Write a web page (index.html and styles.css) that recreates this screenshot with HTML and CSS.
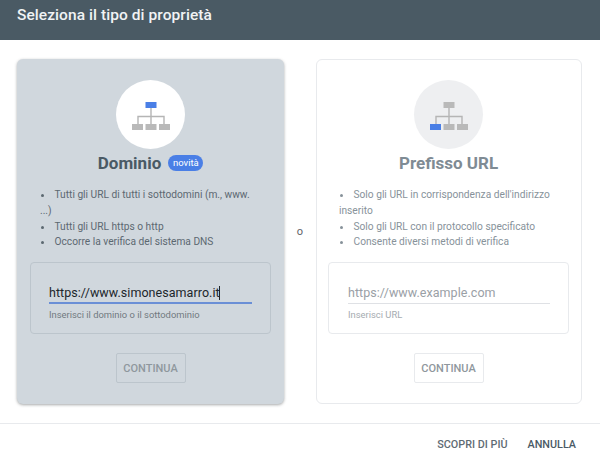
FILE: index.html
```html
<!DOCTYPE html>
<html lang="it">
<head>
<meta charset="utf-8">
<title>Seleziona il tipo di proprietà</title>
<link rel="stylesheet" href="styles.css">
</head>
<body>
<header class="top">Seleziona il tipo di proprietà</header>
<main class="choices">
  <section class="card card-active">
    <div class="circle">
      <svg class="tree" viewBox="0 0 38 28" width="38" height="28">
        <path class="line" d="M19 6V22M6 22V14.5H32V22"/>
        <rect class="blue" x="13.5" y="0" width="11" height="6"/>
        <rect class="grey" x="0" y="22" width="11" height="6"/>
        <rect class="grey" x="13.5" y="22" width="11" height="6"/>
        <rect class="grey" x="27" y="22" width="11" height="6"/>
      </svg>
    </div>
    <h2 class="name">Dominio <span class="badge">novità</span></h2>
    <ul class="points">
      <li>Tutti gli URL di tutti i sottodomini (m., www. ...)</li>
      <li>Tutti gli URL https o http</li>
      <li>Occorre la verifica del sistema DNS</li>
    </ul>
    <div class="inputbox">
      <div class="field field-on">https://www.simonesamarro.it<span class="caret"></span></div>
      <div class="hint">Inserisci il dominio o il sottodominio</div>
    </div>
    <div class="btn">CONTINUA</div>
  </section>
  <div class="or">o</div>
  <section class="card card-idle">
    <div class="circle">
      <svg class="tree" viewBox="0 0 38 28" width="38" height="28">
        <path class="line" d="M19 6V22M6 22V14.5H32V22"/>
        <rect class="grey" x="13.5" y="0" width="11" height="6"/>
        <rect class="blue" x="0" y="22" width="11" height="6"/>
        <rect class="grey" x="13.5" y="22" width="11" height="6"/>
        <rect class="grey" x="27" y="22" width="11" height="6"/>
      </svg>
    </div>
    <h2 class="name">Prefisso URL</h2>
    <ul class="points">
      <li>Solo gli URL in corrispondenza dell'indirizzo inserito</li>
      <li>Solo gli URL con il protocollo specificato</li>
      <li>Consente diversi metodi di verifica</li>
    </ul>
    <div class="inputbox">
      <div class="field">https://www.example.com</div>
      <div class="hint">Inserisci URL</div>
    </div>
    <div class="btn">CONTINUA</div>
  </section>
</main>
<footer class="bottom">
  <span class="link">SCOPRI DI PIÙ</span>
  <span class="link link-strong">ANNULLA</span>
</footer>
</body>
</html>
```
FILE: styles.css
```css
* { box-sizing: border-box; }
html, body { margin: 0; padding: 0; }
body {
  width: 600px;
  height: 450px;
  overflow: hidden;
  background: #fff;
  font-family: Roboto, "Liberation Sans", sans-serif;
  color: #4a5a65;
}
.top {
  height: 40px;
  padding: 6px 17px 0;
  background: #4a5a64;
  color: #f1f3f4;
  font-size: 15.5px;
  font-weight: 500;
  line-height: 19px;
  letter-spacing: 0.07px;
}
.choices {
  display: flex;
  align-items: flex-start;
  padding: 19px 18px 0 17px;
  height: 384px;
  border-bottom: 1px solid #e8eaed;
}
.card {
  width: 267px;
  height: 345px;
  border-radius: 6px;
  padding: 21px 13px 0;
  display: flex;
  flex-direction: column;
}
.card-active {
  background: #d0d7dd;
  box-shadow: 0 1px 3px rgba(60, 64, 67, 0.45);
}
.card-idle {
  width: 266px;
  border: 1px solid #e8eaed;
  padding: 20px 12px 0 11px;
  color: #7f8b94;
}
.or {
  flex: 1;
  text-align: center;
  padding-top: 166px;
  font-size: 11px;
  line-height: 14px;
  color: #5f6368;
}
.circle {
  width: 69px;
  height: 69px;
  margin-bottom: 1px;
  border-radius: 50%;
  align-self: center;
  background: #fff;
  display: flex;
  align-items: center;
  justify-content: center;
}
.card-idle .circle { background: #eeeff1; }
.tree { display: block; margin-top: 2px; }
.line { fill: none; stroke: #b5b5b5; stroke-width: 1.4; }
.blue { fill: #4a7fe6; }
.grey { fill: #b9b9b9; }
.name {
  margin: 1px 0 0;
  height: 24px;
  display: flex;
  align-items: center;
  justify-content: center;
  gap: 3px;
  font-size: 17px;
  font-weight: 700;
  line-height: 24px;
  white-space: pre;
}
.badge {
  height: 16px;
  padding: 0 4.5px;
  border-radius: 8px;
  background: #4a7fe6;
  color: #fff;
  font-size: 9.5px;
  font-weight: 400;
  line-height: 15px;
}
.points {
  list-style: none;
  margin: 12px 0 0;
  padding: 0 14px 0 0;
  font-size: 10.2px;
  line-height: 15.8px;
  height: 66px;
  color: #5c6871;
}
.card-idle .points { color: #87929a; }
.points li { position: relative; text-indent: 14.5px; margin-left: 10px; }
.card-idle .points li { margin-left: 11px; }
.points li::before {
  content: "";
  position: absolute;
  left: 1px;
  top: 7px;
  width: 3px;
  height: 3px;
  border-radius: 50%;
  background: currentColor;
}
.inputbox {
  height: 72px;
  margin-top: 9px;
  border: 1px solid #bcc5cc;
  border-radius: 4px;
  padding: 20px 18px 0;
}
.card-idle .inputbox { border-color: #e8eaed; padding: 20px 18px 0 19px; }
.field {
  height: 21px;
  font-size: 12.5px;
  line-height: 20px;
  letter-spacing: 0.05px;
  color: #20262b;
  border-bottom: 1px solid #dfe1e5;
  white-space: nowrap;
}
.card-idle .field { color: #9aa0a6; }
.field-on { border-bottom: 2px solid #6a8fd6; height: 21px; }
.caret {
  display: inline-block;
  width: 1px;
  height: 14px;
  margin-left: -1px;
  background: #20262b;
  vertical-align: -3px;
}
.hint {
  margin-top: 4px;
  font-size: 9.4px;
  line-height: 13px;
  color: #70797f;
}
.card-idle .hint { color: #a5abb0; }
.btn {
  align-self: center;
  width: 70px;
  height: 30px;
  margin-top: 19px;
  border: 1px solid #bcc5cc;
  border-radius: 2px;
  text-align: center;
  font-size: 11px;
  font-weight: 500;
  line-height: 29px;
  color: #8f979d;
}
.card-idle .btn { border-color: #e8eaed; }
.bottom {
  display: flex;
  justify-content: flex-end;
  gap: 20px;
  padding: 14px 24px 0 0;
  font-size: 10.8px;
  font-weight: 500;
  line-height: 14px;
}
.link { color: #5f6b74; }
.link-strong { color: #4a5a65; }
```
